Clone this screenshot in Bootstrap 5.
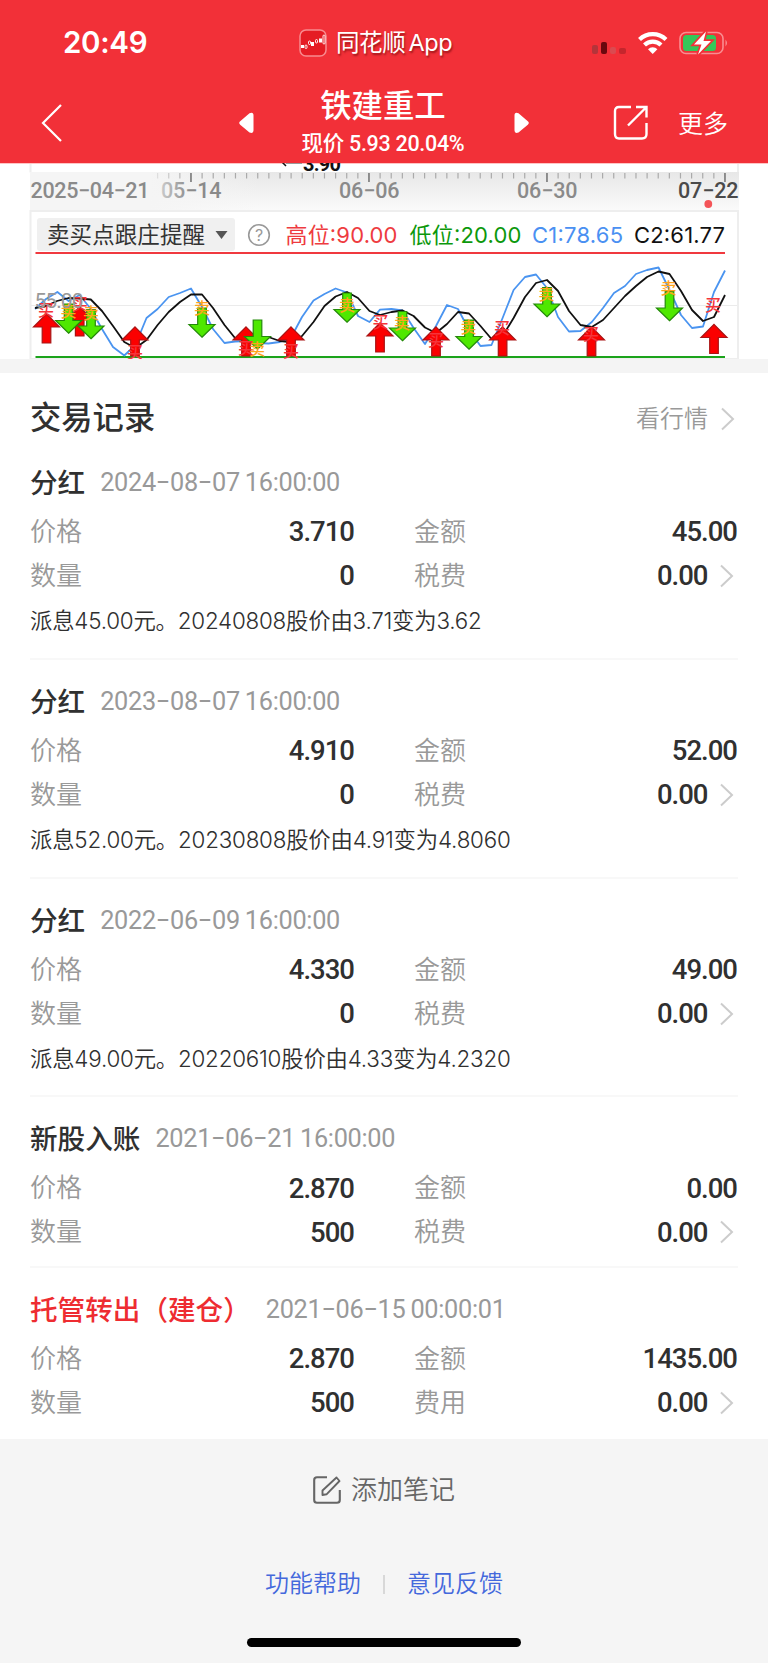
<!DOCTYPE html>
<html lang="zh-CN">
<head>
<meta charset="utf-8">
<meta name="viewport" content="width=device-width, initial-scale=1">
<title>铁建重工</title>
<link href="https://cdn.jsdelivr.net/npm/bootstrap@5.3.0/dist/css/bootstrap.min.css" rel="stylesheet">
<style>
body{width:768px;height:1663px;overflow:hidden;background:#f5f5f5;color:#303030;font-family:Inter,"Noto Sans CJK SC",sans-serif;line-height:1}
svg{display:block;flex:none}
.din{font-family:Roboto,"Noto Sans CJK SC",sans-serif}
.top-bar{height:163px;background:#f23038;color:#fff}
.status-row{height:85px;padding:0 40px 0 63px}
.clock{width:236px;font-size:29.5px;font-weight:600;letter-spacing:-.3px}
.app-name{width:253px;font-size:23.5px;letter-spacing:-.4px;word-spacing:-3px;padding-left:9px;text-shadow:1px 2px 2px rgba(90,0,0,.55)}
.nav-row{height:78px;padding:0 40px 0 41px}
.stock{width:260px;text-align:center;position:relative;margin-top:-3px}
.stock-name{font-size:31.4px;font-weight:500;line-height:40px;margin-left:-2px}
.stock-price{font-size:21.5px;font-weight:500;line-height:30px;white-space:nowrap;margin:2px 0 0 -2px;letter-spacing:-.3px}
.more{font-size:25px;font-weight:350}
.records{height:1066px;padding:0 30px}
.strip{height:14px;background:#f4f4f4}
.section-head{height:68px;padding-top:23px}
.section-head h2{font-size:31.3px;font-weight:500;line-height:45px}
.section-head a{font-size:24px;font-weight:350;color:#999;line-height:44px}
.entry{height:218.8px;padding-top:20px;border-bottom:2px solid #f8f8f8}
.entry-short{height:170.5px}
.entry:last-child{border:0}
.entry-title{height:44px;gap:15px;margin-bottom:5px}
.kind{font-size:27.6px;font-weight:500;line-height:44px}
.stamp{font-family:Roboto,sans-serif;font-size:25.3px;font-weight:400;color:#999;letter-spacing:-.3px;word-spacing:-1px;line-height:43px}
.pairs{display:grid;grid-template-columns:324px 323px;column-gap:60px;grid-auto-rows:44px}
.pairs>div{display:flex;align-items:center;justify-content:space-between}
.key{font-size:26px;font-weight:350;color:#999}
.num{font-family:Roboto,sans-serif;font-size:27.500px;font-weight:500;letter-spacing:-1px}
.chev{margin-left:12px;margin-right:3px}
.num+.chev{margin-left:11.5px}
.desc{font-size:22.4px;font-weight:350;line-height:46px;letter-spacing:-.22px}
.foot{height:224px}
.note{height:102px;gap:10px;font-size:26px;color:#666;font-weight:350}
.links{height:86px;font-size:24px;font-weight:350;gap:22px}
.links a{color:#4468dc}
.rule{width:2px;height:19px;background:#d8d8d8}
.home{width:274px;height:9px;border-radius:5px;background:#000;margin:11px auto 0 247px}
</style>
</head>
<body>
<svg width="0" height="0" class="position-absolute"><defs>
<g id="up"><path d="M0 .8 13 14H4.300V30H-4.300V14H-13Z" fill="#fb0000" stroke="#a81414" stroke-width="1.200"/></g>
<g id="dn"><path d="M0 -.8 13 -13.500H4.300V-30H-4.300V-13.500H-13Z" fill="#4fe800" stroke="#24890a" stroke-width="1.200"/></g>
</defs></svg>

<header class="top-bar">
  <div class="status-row d-flex align-items-center">
    <div class="clock">20:49</div>
    <svg width="28" height="28" viewBox="0 0 28 28"><rect x="1" y="1" width="26" height="26" rx="6" fill="#e51c24" stroke="#f88b8f" stroke-width="1.500"/><g fill="#fff"><rect x="2" y="16" width="3" height="3"/><rect x="12" y="13" width="3" height="4"/><rect x="20" y="9.500" width="3" height="4"/></g><g fill="none" stroke="#fff" stroke-width=".9"><rect x="6" y="16" width="2" height="3.500" rx="1"/><rect x="9.500" y="12" width="2" height="3.500" rx="1"/><rect x="16.500" y="10.500" width="2" height="3.500" rx="1"/><rect x="24" y="6" width="2" height="9" rx="1"/></g></svg>
    <div class="app-name">同花顺 App</div>
    <svg class="ms-auto" width="138" height="28" viewBox="590 28 138 28"><rect x="592" y="44" width="6" height="9" rx="2" fill="#b4343a"/><rect x="601" y="41" width="6" height="12" rx="2" fill="#6b080e"/><rect x="610" y="46" width="6" height="7" rx="2" fill="#db4a50"/><rect x="619" y="47" width="7" height="6" rx="2" fill="#c5262d"/>
      <g fill="none" stroke="#fff" stroke-width="4.200"><path d="M639.500 38.500a19 19 0 0 1 26.500 0"/><path d="M644.500 44a11.800 11.800 0 0 1 16.500 0"/></g><path d="M652.700 53l-4.700-4.700a6.600 6.600 0 0 1 9.400 0z" fill="#fff"/>
      <rect x="680" y="31.500" width="43" height="21" rx="6" fill="none" stroke="#f98d91" stroke-width="1.600"/><rect x="683" y="34" width="33" height="16" rx="3.500" fill="#34c759"/><path d="M725.500 38.500q3 3.500 0 7z" fill="#f98d91"/><path d="M706 30.500 694 43.500h7.500L698 53.500 711 40h-7.500Z" fill="#fff" stroke="#f23038" stroke-width="3.400" paint-order="stroke"/></svg>
  </div>
  <div class="nav-row d-flex align-items-center">
    <svg width="22" height="40" viewBox="0 0 22 40" style="margin-top:-3px"><path d="M20 2 2 20l18 18" fill="none" stroke="#fff" stroke-width="2.200"/></svg>
    <svg class="ms-auto" width="15" height="22" viewBox="0 0 15 22" style="margin-top:-2px"><path d="M1.200 9.300 10.500 1.200Q14.500-.5 14.500 3.500V18.500Q14.500 22 10.500 20.500L1.200 12.700Q-.8 11 1.200 9.300Z" fill="#fff"/></svg>
    <div class="stock din"><div class="stock-name">铁建重工</div><div class="stock-price">现价 5.93 20.04%</div></div>
    <svg width="15" height="22" viewBox="0 0 15 22" style="margin-top:-2px"><path d="M13.800 9.300 4.500 1.200Q.5-.5 .5 3.500V18.500Q.5 22 4.500 20.500L13.800 12.700Q15.800 11 13.800 9.300Z" fill="#fff"/></svg>
    <svg width="36" height="36" viewBox="0 0 36 36" style="margin:-2px 0 0 84px"><path d="M18 2H6Q2 2 2 6V29Q2 33.500 6 33.500H29Q33.500 33.500 33.500 29V18M23 2H33.500V12.500M33 2.500 15 20.500" fill="none" stroke="#fff" stroke-width="2.400"/></svg>
    <div class="more" style="margin-left:29px">更多</div>
  </div>
</header>

<svg id="chart" width="768" height="196" viewBox="0 163 768 196" font-family='Inter,"Noto Sans CJK SC",sans-serif'>
  <defs><linearGradient id="band" x1="0" y1="0" x2="0" y2="1"><stop offset="0" stop-color="#e7e7e7"/><stop offset="1" stop-color="#fafafa"/></linearGradient>
  <linearGradient id="fade" x1="150" x2="260" y1="0" y2="0" gradientUnits="userSpaceOnUse"><stop offset="0" stop-color="#f5f5f5"/><stop offset="1" stop-color="#f5f5f5" stop-opacity="0"/></linearGradient>
  <linearGradient id="lab" x1="160" x2="190" y1="0" y2="0" gradientUnits="userSpaceOnUse"><stop offset="0" stop-color="#ccc"/><stop offset="1" stop-color="#8a8a8a"/></linearGradient></defs>
  <rect y="163" width="768" height="196" fill="#fff"/><rect y="163" width="768" height="1" fill="#ffc4c4"/>
  <path d="M30.500 164V172.500M738 164V172.500" stroke="#eee" stroke-width="2"/>
  <text x="303" y="171" font-family="Roboto,sans-serif" font-size="20" font-weight="700" textLength="38" fill="#111">3.90</text><path d="M281 161l5 5" stroke="#111" stroke-width="1.500"/><path d="M286 163.500h16" stroke="#999"/>
  <rect x="30" y="172" width="709" height="38" fill="url(#band)"/><rect x="30" y="172" width="230" height="38" fill="url(#fade)"/>
  <g id="ticks"></g>
  <g font-family="Roboto,sans-serif" font-size="21.500" font-weight="500" fill="#8a8a8a">
    <text x="30.500" y="198" textLength="119">2025−04−21</text><text x="161" y="198" textLength="60.500" fill="url(#lab)">05−14</text><text x="339" y="198" textLength="60.500">06−06</text><text x="517" y="198" textLength="60.500">06−30</text><text x="678" y="198" textLength="60.500" fill="#4a4a4a">07−22</text></g>
  <circle cx="708.300" cy="204" r="3.900" fill="#f45458"/>
  <path d="M30.500 359V211H738V359" fill="none" stroke="#eee" stroke-width="2"/><path d="M31 358.500H738" stroke="#eee"/>
  <path d="M31 305.500H737" stroke="#ebebeb"/>
  <rect x="37" y="218" width="198" height="33" rx="3" fill="#f0f0f0"/><text x="47" y="243" font-size="22.500" textLength="158" fill="#333">卖买点跟庄提醒</text><path d="M215.500 231h12L221.500 239z" fill="#555"/>
  <circle cx="259" cy="235" r="10.300" fill="none" stroke="#999" stroke-width="1.600"/><text x="259" y="241" font-size="16" text-anchor="middle" fill="#999">?</text>
  <g font-size="22"><text x="285.500" y="243" textLength="112" fill="#ee3b40">高位:90.00</text><text x="409.500" y="243" textLength="112" fill="#0c980c">低位:20.00</text><text x="532" y="243" textLength="91" fill="#4a90f2">C1:78.65</text><text x="634" y="243" textLength="91" fill="#111">C2:61.77</text></g>
  <path d="M35.500 253H725" stroke="#f0393f" stroke-width="2"/><path d="M35.500 357H725" stroke="#1ba31b" stroke-width="2"/>
  <g fill="none" stroke-width="1.800" stroke-linejoin="round">
  <path stroke="#4a94f0" d="M35 309 46 299 57.400 292 68.600 301 79.700 295 90.800 309 102 329 113 347 124.300 355.500 135.400 345 146.500 318 157.600 309 168.700 297 180 293 191 288.500 202 307 213 329 224.500 343 235 341.500 246 341 257 343 268.500 343.500 279.700 342 290.800 338 302 317 313.500 300.500 324.500 294 335.600 288.500 347 292.500 358 316 369.500 322 380 309.700 391.500 309 402.600 310.500 413.600 328 425 344 436 326 447 305 458 309 469 330 480.500 346 491.500 345 502.600 318 513.600 290 525 277 536 274.500 547 288 558 317 569 331.500 580.500 331 591.800 322 603 308 614 293 625 286 636 274 647 270 658.500 267.500 669.500 290 681 315 692 328 703 326.500 714 292 725 270.500"/>
  <path stroke="#111" d="M35 308 46 306 57 301 68.600 298 79.700 298.500 90.800 299.500 102 311 113 326 124.300 342 135.400 348 146.500 340 157.600 325 168.700 312 180 302 191 294.500 202 294.500 213 308 224.500 325 235 338 246 340 257 337 268.500 337 279.700 341 290.800 342 302 336 313.500 322 324.500 306 335.600 296.500 347 292 358 298 369.500 311 380 315 391.500 312 402.600 310.500 413.600 316 425 327.500 436 333 447 324 458 312 469 313.500 480.500 326 491.500 339 502.600 336 513.600 318 525 297 536 283 547 280 558 291 569 311 580.500 325 591.800 327 603 320 614 308 625 296 636 286 647 277 658.500 271.500 669.500 274 681 291 692 310 703 321 714 317 725 295"/></g>
  <use href="#up" x="46.500" y="313"/><use href="#up" x="79.700" y="306"/><use href="#up" x="135" y="326"/><use href="#up" x="246" y="326"/><use href="#up" x="291" y="326"/><use href="#up" x="380" y="322"/><use href="#up" x="436" y="326"/><use href="#up" x="502.600" y="326"/><use href="#up" x="591.500" y="326"/><use href="#up" x="714" y="323.500"/>
  <use href="#dn" x="68.600" y="334"/><use href="#dn" x="91" y="339.500"/><use href="#dn" x="202" y="338"/><use href="#dn" x="257.500" y="350"/><use href="#dn" x="347" y="323"/><use href="#dn" x="402.500" y="341.500"/><use href="#dn" x="469" y="350"/><use href="#dn" x="547" y="317.500"/><use href="#dn" x="669.500" y="321.500"/>
  <g font-size="16" font-weight="500" text-anchor="middle" fill="#f5343a"><text x="46" y="316">买</text><text x="79.700" y="310">买</text><text x="135" y="357.500">买</text><text x="246" y="353.500">买</text><text x="291" y="357">买</text><text x="380.500" y="327.500">买</text><text x="436" y="346">买</text><text x="502" y="333.500">买</text><text x="591" y="340">买</text><text x="713" y="310.500">买</text></g>
  <g font-size="16" font-weight="500" text-anchor="middle" fill="#ffa41c"><text x="68.500" y="317">卖</text><text x="91" y="318.500">卖</text><text x="202" y="314">卖</text><text x="257" y="354.500">卖</text><text x="347" y="310.500">卖</text><text x="402" y="329">卖</text><text x="468.500" y="333">卖</text><text x="546.500" y="299.500">卖</text><text x="668.500" y="293.500">卖</text></g>
  <text x="34.500" y="307.500" font-family="Roboto,sans-serif" font-size="21" textLength="49" fill="#999">55.00</text>
</svg>
<div class="strip"></div>

<main class="records bg-white">
  <div class="section-head d-flex justify-content-between"><h2 class="m-0">交易记录</h2><a class="text-decoration-none d-flex align-items-center">看行情<svg class="chev" width="15" height="24" viewBox="0 0 15 24"><path d="M2 1.500 13 12 2 22.500" fill="none" stroke="#ccc" stroke-width="2"/></svg></a></div>

  <section class="entry"><div class="entry-title d-flex"><span class="kind">分红</span><span class="stamp">2024−08−07 16:00:00</span></div>
    <div class="pairs"><div><span class="key">价格</span><span class="num">3.710</span></div><div><span class="key">金额</span><span class="num">45.00</span></div><div><span class="key">数量</span><span class="num">0</span></div><div><span class="key">税费</span><span class="num ms-auto">0.00</span><svg class="chev" width="15" height="24" viewBox="0 0 15 24"><path d="M2 1.500 13 12 2 22.500" fill="none" stroke="#ccc" stroke-width="2"/></svg></div></div>
    <div class="desc">派息45.00元。20240808股价由3.71变为3.62</div></section>

  <section class="entry"><div class="entry-title d-flex"><span class="kind">分红</span><span class="stamp">2023−08−07 16:00:00</span></div>
    <div class="pairs"><div><span class="key">价格</span><span class="num">4.910</span></div><div><span class="key">金额</span><span class="num">52.00</span></div><div><span class="key">数量</span><span class="num">0</span></div><div><span class="key">税费</span><span class="num ms-auto">0.00</span><svg class="chev" width="15" height="24" viewBox="0 0 15 24"><path d="M2 1.500 13 12 2 22.500" fill="none" stroke="#ccc" stroke-width="2"/></svg></div></div>
    <div class="desc">派息52.00元。20230808股价由4.91变为4.8060</div></section>

  <section class="entry"><div class="entry-title d-flex"><span class="kind">分红</span><span class="stamp">2022−06−09 16:00:00</span></div>
    <div class="pairs"><div><span class="key">价格</span><span class="num">4.330</span></div><div><span class="key">金额</span><span class="num">49.00</span></div><div><span class="key">数量</span><span class="num">0</span></div><div><span class="key">税费</span><span class="num ms-auto">0.00</span><svg class="chev" width="15" height="24" viewBox="0 0 15 24"><path d="M2 1.500 13 12 2 22.500" fill="none" stroke="#ccc" stroke-width="2"/></svg></div></div>
    <div class="desc">派息49.00元。20220610股价由4.33变为4.2320</div></section>

  <section class="entry entry-short"><div class="entry-title d-flex"><span class="kind">新股入账</span><span class="stamp">2021−06−21 16:00:00</span></div>
    <div class="pairs"><div><span class="key">价格</span><span class="num">2.870</span></div><div><span class="key">金额</span><span class="num">0.00</span></div><div><span class="key">数量</span><span class="num">500</span></div><div><span class="key">税费</span><span class="num ms-auto">0.00</span><svg class="chev" width="15" height="24" viewBox="0 0 15 24"><path d="M2 1.500 13 12 2 22.500" fill="none" stroke="#ccc" stroke-width="2"/></svg></div></div></section>

  <section class="entry entry-short"><div class="entry-title d-flex"><span class="kind" style="color:#ee2c31">托管转出（建仓）</span><span class="stamp">2021−06−15 00:00:01</span></div>
    <div class="pairs"><div><span class="key">价格</span><span class="num">2.870</span></div><div><span class="key">金额</span><span class="num">1435.00</span></div><div><span class="key">数量</span><span class="num">500</span></div><div><span class="key">费用</span><span class="num ms-auto">0.00</span><svg class="chev" width="15" height="24" viewBox="0 0 15 24"><path d="M2 1.500 13 12 2 22.500" fill="none" stroke="#ccc" stroke-width="2"/></svg></div></div></section>
</main>

<footer class="foot">
  <div class="note d-flex align-items-center justify-content-center"><svg width="28" height="28" viewBox="0 0 28 28"><path d="M14 1.300H4Q1.200 1.300 1.200 4V24Q1.200 26.800 4 26.800H24Q26.800 26.800 26.800 24V14" fill="none" stroke="#666" stroke-width="2.100"/><path d="M9.500 19v-4.500L23.500 1.500l3 3.500L13.500 18.300Z" fill="none" stroke="#666" stroke-width="1.900" stroke-linejoin="round"/></svg><span>添加笔记</span></div>
  <div class="links d-flex align-items-center justify-content-center"><a class="text-decoration-none">功能帮助</a><span class="rule"></span><a class="text-decoration-none">意见反馈</a></div>
  <div class="home"></div>
</footer>
<script src="https://cdn.jsdelivr.net/npm/bootstrap@5.3.0/dist/js/bootstrap.bundle.min.js"></script>
<script>
// Time-axis ticks: one per trading day, a tall one every 16 days
let t='';
for(let i=0;i<=51;i++){const x=157.600+i*11.125,major=i%16===3;
  t+=`<path d="M${x} 173V${major?182:178.500}" stroke="${major?'#777':'#aaa'}" stroke-width="${major?1.600:1.200}" opacity="${i<3?.3+i*.25:1}"/>`}
document.getElementById('ticks').innerHTML=t;
</script>
</body>
</html>
